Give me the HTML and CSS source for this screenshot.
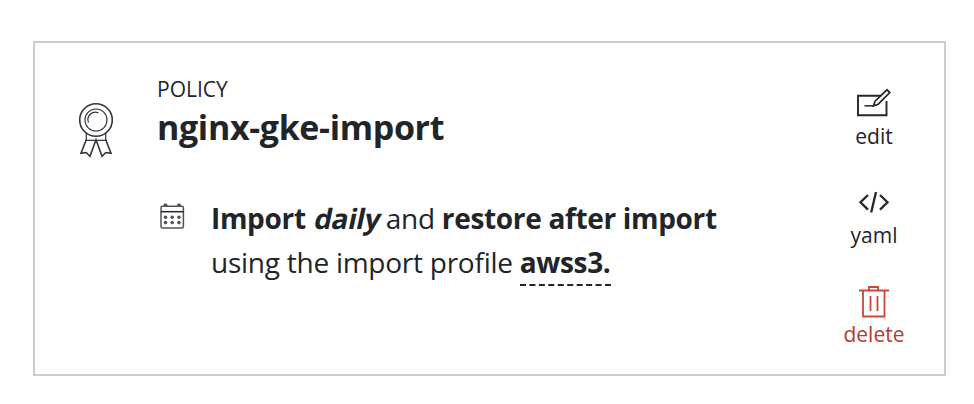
FILE: index.html
```html
<!DOCTYPE html>
<html lang="en">
<head>
    <meta charset="UTF-8">
    <title>Policy</title>
    <link rel="stylesheet" href="styles.css">
</head>
<body>
    <article class="policy-card">
        <svg class="policy-icon" width="36" height="58" viewBox="0 0 36 58" fill="none" stroke="#30343b" stroke-width="1.6">
            <circle cx="18" cy="18" r="16.3"/>
            <circle cx="18" cy="18" r="11" stroke-width="1.1"/>
            <path d="M10.5 20.5A7.5 7.5 0 0 1 20.5 10.8" stroke-width="1.2"/>
            <path d="M8.3 31v7.3h19.4V31" stroke-width="1.2"/>
            <path d="M8.3 37.5L3 51.2l5.2-.7 3.8 3.8 6-16.5 6 16.5 3.8-3.8 5.2.7-5.3-13.7"/>
        </svg>
        <div class="policy-main">
            <div class="policy-type">POLICY</div>
            <h1 class="policy-name">nginx-gke-import</h1>
            <div class="policy-action">
                <svg class="calendar-icon" width="26" height="27" viewBox="0 0 26 27" fill="none" stroke="#50545a" stroke-width="1.5">
                    <rect x="1" y="3.3" width="22.4" height="21.6" rx="1.5"/>
                    <path d="M1 8.7h22.4" stroke="#24272b"/>
                    <path d="M4 3l1-1.5h1L7 3M17.5 3l1-1.5h1l1 1.5" stroke-width="2"/>
                    <g fill="#50545a" stroke="none">
                        <circle cx="5.5" cy="14.3" r="1.8"/>
                        <circle cx="12.2" cy="14.3" r="1.8"/>
                        <circle cx="18.9" cy="14.3" r="1.8"/>
                        <circle cx="5.5" cy="19.6" r="1.8"/>
                        <circle cx="12.2" cy="19.6" r="1.8"/>
                        <circle cx="18.9" cy="19.6" r="1.8"/>
                    </g>
                </svg>
                <p class="policy-text">
                    <b>Import <span class="frequency">daily</span></b> and <b>restore after import</b><br>
                    using the import profile <b class="profile">awss3.</b>
                </p>
            </div>
        </div>
        <div class="actions">
            <a class="action">
                <svg width="36" height="32" viewBox="0 0 36 32" fill="none" stroke="#24272b" stroke-width="1.9">
                    <path d="M25 7.8H2v19.4h28.5V13"/>
                    <path d="M8.5 17.8H18" stroke-width="1.5"/>
                    <path d="M17.5 17.8l1.6-4.6L31 1.8l2.8 2.8L22.2 16.2z" fill="#fff" stroke-width="1.7"/>
                </svg>
                <span>edit</span>
            </a>
            <a class="action">
                <svg width="36" height="32" viewBox="0 0 36 32" fill="none" stroke="#24272b" stroke-width="2.3">
                    <path d="M12 8L4.5 15.3 12 22.6M24 8l7.5 7.3-7.5 7.3M20 5l-4.8 20.5"/>
                </svg>
                <span>yaml</span>
            </a>
            <a class="action delete">
                <svg width="36" height="32" viewBox="0 0 36 32" fill="none" stroke="#cd4635" stroke-width="1.8">
                    <path d="M3 4.5h30M13 4.5V1h9v3.5M7 4.5v26h21.5v-26M14.5 10v15M21.5 10v15"/>
                </svg>
                <span>delete</span>
            </a>
        </div>
    </article>
</body>
</html>
```
FILE: styles.css
```css
* {
    box-sizing: border-box;
}
body {
    margin: 0;
    padding: 41px 28px 0 33px;
    background-color: #fff;
    color: #212529;
    font-family: "Open Sans", sans-serif;
}
.policy-card {
    display: flex;
    height: 335px;
    border: 2px solid #ccc;
}
.policy-icon {
    flex: none;
    margin: 59px 0 0 43px;
}
.policy-main {
    flex: 1;
    padding: 31px 0 0 43px;
    white-space: nowrap;
}
.policy-type {
    font-size: 21px;
    line-height: 31px;
}
.policy-name {
    margin: 0;
    font-size: 34px;
    line-height: 44px;
    font-weight: 700;
    letter-spacing: -0.35px;
}
.policy-action {
    display: flex;
    margin-top: 47px;
}
.calendar-icon {
    flex: none;
    margin: 7px 25px 0 3px;
}
.policy-text {
    margin: 0;
    font-size: 28px;
    line-height: 44px;
    letter-spacing: -0.25px;
}
.policy-text b {
    font-weight: 700;
    letter-spacing: -0.33px;
}
.frequency {
    display: inline-block;
    transform: translateX(2px) skewX(-12deg);
}
.profile {
    padding-bottom: 3px;
    border-bottom: 2px dashed #212529;
}
.actions {
    flex: none;
    width: 80px;
    margin-right: 30px;
    padding-top: 45px;
}
.action {
    display: flex;
    flex-direction: column;
    align-items: center;
    height: 99px;
    font-size: 21px;
    line-height: 32px;
}
.delete {
    color: #b93a2b;
}
```
